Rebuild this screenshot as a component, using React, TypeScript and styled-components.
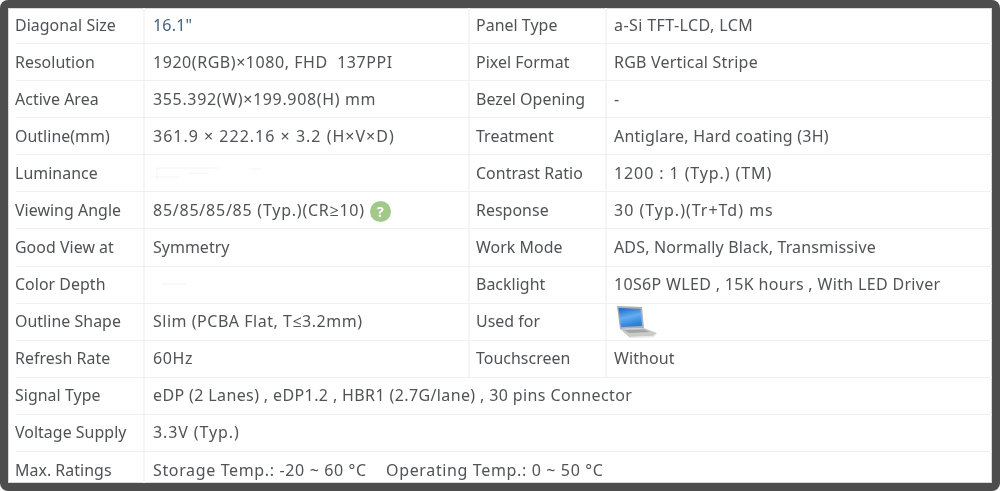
import React from "react";
import styled, { createGlobalStyle } from "styled-components";

const Global = createGlobalStyle`
  html, body { margin: 0; padding: 0; background: #fff; }
  body { font-family: "Noto Sans", "Open Sans", sans-serif; }
`;

const Frame = styled.div`
  width: 1000px;
  height: 491px;
  box-sizing: border-box;
  padding: 8px;
  background: #4d4d4d;
  border-radius: 8px;
  overflow: hidden;
`;

const Sheet = styled.div`
  height: 475px;
  background: #fff;
  overflow: hidden;
  box-shadow: inset 0 0 0 1px #d8d8d8;
`;

const Row = styled.div`
  position: relative;
  display: grid;
  grid-template-columns: 137px 325px 137px 1fr;
  height: 37.1px;
  box-sizing: border-box;
  &::after {
    content: "";
    position: absolute;
    left: 8px;
    right: 0;
    bottom: 0;
    height: 1px;
    background: #f0f0f0;
  }
  &:first-child { height: 36px; }
  &:last-child::after { display: none; }
`;

const Divider = styled.div<{ $pad: number; $span?: number }>`
  grid-column: span ${p => p.$span ?? 1};
  display: flex;
  align-items: center;
  padding-bottom: 2px;
  box-sizing: border-box;
  padding-left: ${p => p.$pad}px;
  border-right: 2px solid #f5f5f5;
  &:last-child { border-right: none; }
`;

const Label = styled.span`
  font-size: 15.9px;
  letter-spacing: 0.05px;
  line-height: 20px;
  color: #4f5154;
  white-space: pre;
  filter: blur(0.3px);
`;

const Value = styled.span<{ $track?: number; $accent?: boolean }>`
  display: flex;
  align-items: center;
  gap: 5px;
  font-size: 16px;
  letter-spacing: ${p => p.$track ?? 0.36}px;
  line-height: 20px;
  color: ${p => (p.$accent ? "#48617f" : "#515357")};
  white-space: pre;
  filter: blur(0.3px);
`;

const Help = styled.span`
  display: inline-flex;
  align-items: center;
  justify-content: center;
  width: 21px;
  height: 21px;
  margin-top: 4px;
  border-radius: 50%;
  background: #a3c98a;
  color: #fff;
  font-size: 14px;
  font-weight: 700;
  letter-spacing: 0;
`;

const Smudge = styled.svg`
  display: block;
`;

const LaptopSvg = styled.svg`
  display: block;
  margin: 0 0 0 -1px;
`;

const LaptopIcon = () => (
  <LaptopSvg width="46" height="34" viewBox="0 0 46 34">
    <defs>
      <linearGradient id="scr" x1="0" y1="0" x2="0.3" y2="1">
        <stop offset="0" stopColor="#1d62c9" />
        <stop offset="0.55" stopColor="#62aef0" />
        <stop offset="1" stopColor="#2e7ed8" />
      </linearGradient>
    </defs>
    <path d="M4 2 L29 3 L31 24 L7 25 Z" fill="#a9b0b8" />
    <path d="M5.5 4 L27.5 5 L29 22 L8 23 Z" fill="url(#scr)" />
    <path d="M7 25 L31 24 L44 29 L40 32 L16 33 Z" fill="#c9cbc9" />
    <path d="M11 26 L31 25.5 L37 28 L16 29 Z" fill="#a3a5a3" />
    <path d="M16 33 L40 32 L44 29 L44 30 L40 33.5 L16 34 Z" fill="#e8e8e6" />
  </LaptopSvg>
);

const LuminanceMark = () => (
  <Smudge width="120" height="20" viewBox="0 0 120 20" style={{ marginLeft: -4 }}>
    <path d="M2 14 H30 M8 5 H70 M40 10 H60 M8 5 V16 M100 6 H112" stroke="#f4f4f4" fill="none" />
  </Smudge>
);

const DepthMark = () => (
  <Smudge width="40" height="8" viewBox="0 0 40 8" style={{ marginLeft: 7 }}>
    <path d="M1 4 H26" stroke="#f2f2f2" fill="none" />
  </Smudge>
);

type Val = { text: React.ReactNode; track?: number };
type R = [string, Val, string, Val];

const rows: R[] = [
  ["Diagonal Size", { text: '16.1"', track: 0.2 }, "Panel Type", { text: "a-Si TFT-LCD, LCM", track: 0.42 }],
  ["Resolution", { text: "1920(RGB)×1080, FHD  137PPI", track: 0.55 }, "Pixel Format", { text: "RGB Vertical Stripe", track: 0.2 }],
  ["Active Area", { text: "355.392(W)×199.908(H) mm", track: 0.65 }, "Bezel Opening", { text: "-" }],
  ["Outline(mm)", { text: "361.9 × 222.16 × 3.2 (H×V×D)", track: 1 }, "Treatment", { text: "Antiglare, Hard coating (3H)", track: 0.22 }],
  ["Luminance", { text: <LuminanceMark /> }, "Contrast Ratio", { text: "1200 : 1 (Typ.) (TM)", track: 0.9 }],
  ["Viewing Angle", { text: <>85/85/85/85 (Typ.)(CR≥10)<Help>?</Help></>, track: 0.76 }, "Response", { text: "30 (Typ.)(Tr+Td) ms", track: 1 }],
  ["Good View at", { text: "Symmetry", track: 0 }, "Work Mode", { text: "ADS, Normally Black, Transmissive", track: 0.15 }],
  ["Color Depth", { text: <DepthMark /> }, "Backlight", { text: "10S6P WLED , 15K hours , With LED Driver", track: 0.33 }],
  ["Outline Shape", { text: "Slim (PCBA Flat, T≤3.2mm)", track: 0.52 }, "Used for", { text: <LaptopIcon /> }],
  ["Refresh Rate", { text: "60Hz", track: 0.6 }, "Touchscreen", { text: "Without", track: 0.1 }],
];

const wide: [string, string, number][] = [
  ["Signal Type", "eDP (2 Lanes) , eDP1.2 , HBR1 (2.7G/lane) , 30 pins Connector", 0.38],
  ["Voltage Supply", "3.3V (Typ.)", 0.9],
  ["Max. Ratings", "Storage Temp.: -20 ~ 60 °C    Operating Temp.: 0 ~ 50 °C", 0.64],
];

export default function App() {
  return (
    <>
      <Global />
      <Frame>
        <Sheet>
          {rows.map((r, i) => (
            <Row key={r[0]}>
              <Divider $pad={7}><Label>{r[0]}</Label></Divider>
              <Divider $pad={8}><Value $accent={i === 0} $track={r[1].track}>{r[1].text}</Value></Divider>
              <Divider $pad={6}><Label>{r[2]}</Label></Divider>
              <Divider $pad={7}><Value $track={r[3].track}>{r[3].text}</Value></Divider>
            </Row>
          ))}
          {wide.map(r => (
            <Row key={r[0]}>
              <Divider $pad={7}><Label>{r[0]}</Label></Divider>
              <Divider $pad={8} $span={3}><Value $track={r[2]}>{r[1]}</Value></Divider>
            </Row>
          ))}
        </Sheet>
      </Frame>
    </>
  );
}
